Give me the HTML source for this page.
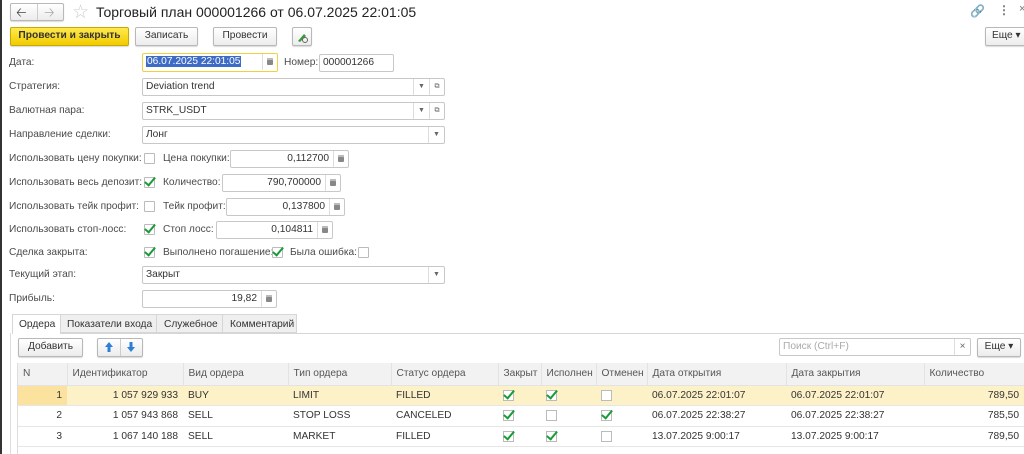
<!DOCTYPE html>
<html><head><meta charset="utf-8"><style>
*{box-sizing:border-box;margin:0;padding:0}
body{width:1024px;height:454px;overflow:hidden;background:#fff;font-family:"Liberation Sans",Arial,sans-serif;font-size:10.2px;color:#333;position:relative}
.a{position:absolute;white-space:nowrap}
.lbl{position:absolute;color:#4a4a4a;font-size:10.2px;line-height:14px;white-space:nowrap}
.btn{position:absolute;border:1px solid #b8b8b8;border-radius:2px;background:linear-gradient(#fff,#ececec);box-shadow:0 1px 1px rgba(0,0,0,.15);text-align:center;font-size:10.2px;line-height:16px;color:#333;white-space:nowrap}
.inp{position:absolute;border:1px solid #c8c8c8;border-radius:2px;background:#fff;height:18px;line-height:16px;padding:0 3px;font-size:10.2px;color:#333;white-space:nowrap}
.dd{position:absolute;right:0;top:0;width:16px;height:16px;border-left:1px solid #ddd;text-align:center;font-size:7px;color:#666;line-height:16px}
.cb{position:absolute;width:11px;height:11px;border:1px solid #bbb;border-radius:1px;background:#fff}
.ck::after{content:"";position:absolute;left:2px;top:-3px;width:4px;height:9px;border-right:2px solid #1a9a3a;border-bottom:2px solid #1a9a3a;transform:rotate(40deg)}
.calc{position:absolute;right:0;top:0;width:15px;height:16px;border-left:1px solid #ddd}
.calc::after{content:"";position:absolute;left:4px;top:4px;width:6px;height:7px;background:#888;border-radius:1px;box-shadow:inset 0 2px 0 #bbb}
table{border-collapse:collapse;position:absolute;left:18px;top:363px;table-layout:fixed;width:1006px}
td{height:20.5px;border-bottom:1px solid #e6e6e6;padding:0 5px;white-space:nowrap;overflow:hidden;font-size:10.2px;color:#333;position:relative}
th{height:22px;background:#f2f2f2;font-weight:normal;text-align:left;color:#555;padding:0 5px;border-right:1px solid #e3e3e3;font-size:10.2px;border-bottom:1px solid #e3e3e3;white-space:nowrap;overflow:hidden}
.r{text-align:right}
.hl td{background:#fdf1c8}
.hl td.n{background:#fbe39f}
.tcb{position:relative;display:inline-block;width:11px;height:11px;border:1px solid #bbb;background:#fff;vertical-align:middle}
</style></head><body>
<div class="a" style="left:0;top:0;width:2px;height:454px;background:#333"></div>
<div class="a" style="left:10px;top:333px;width:1px;height:121px;background:#ddd"></div>
<!-- nav -->
<div class="btn" style="left:10px;top:3px;width:54px;height:18px"></div>
<div class="a" style="left:37px;top:4px;width:1px;height:16px;background:#ccc"></div>
<div class="a" style="left:16px;top:4px;font-size:13px;color:#444">&#129120;</div>
<div class="a" style="left:44px;top:4px;font-size:13px;color:#aaa">&#129122;</div>
<div class="a" style="left:72px;top:1px;font-size:19px;color:#ccc">☆</div>
<div class="a" style="left:96px;top:4px;font-size:14px;color:#222">Торговый план 000001266 от 06.07.2025 22:01:05</div>
<div class="a" style="left:970px;top:4px;font-size:12px;color:#999">&#128279;</div>
<div class="a" style="left:998px;top:3px;font-size:12px;color:#777;font-weight:bold">⋮</div>
<div class="a" style="left:1019px;top:3px;font-size:11px;color:#777">×</div>
<!-- toolbar -->
<div class="btn" style="left:10px;top:27px;width:119px;height:19px;background:linear-gradient(#ffe94d,#f2cc00);border-color:#c9a800;font-weight:bold;color:#333">Провести и закрыть</div>
<div class="btn" style="left:135px;top:27px;width:63px;height:19px">Записать</div>
<div class="btn" style="left:213px;top:27px;width:64px;height:19px">Провести</div>
<div class="btn" style="left:292px;top:27px;width:20px;height:19px"><svg width="14" height="14" viewBox="0 0 14 14" style="margin-top:2px"><path d="M3 11 L9 4 L11 6 L5 12 Z" fill="#3a9a3a"/><circle cx="10" cy="10" r="2.5" fill="none" stroke="#666"/></svg></div>
<div class="btn" style="left:985px;top:27px;width:45px;height:19px;text-align:left;padding-left:6px">Еще ▾</div>
<!-- fields -->
<div class="lbl" style="left:9px;top:56px">Дата:</div>
<div class="inp" style="left:142px;top:53px;width:136px;height:19px;border-color:#f0d040"><span style="background:#3d6bc6;color:#fff;padding:0 1px">06.07.2025 22:01:05</span><div class="calc"></div></div>
<div class="lbl" style="left:284px;top:56px">Номер:</div>
<div class="inp" style="left:319px;top:54px;width:75px">000001266</div>

<div class="lbl" style="left:9px;top:80px">Стратегия:</div>
<div class="inp" style="left:142px;top:78px;width:303px">Deviation trend<div class="dd" style="right:15px">▼</div><div class="dd" style="width:15px">⧉</div></div>
<div class="lbl" style="left:9px;top:104px">Валютная пара:</div>
<div class="inp" style="left:142px;top:102px;width:303px">STRK_USDT<div class="dd" style="right:15px">▼</div><div class="dd" style="width:15px">⧉</div></div>
<div class="lbl" style="left:9px;top:128px">Направление сделки:</div>
<div class="inp" style="left:142px;top:126px;width:303px">Лонг<div class="dd">▼</div></div>

<div class="lbl" style="left:9px;top:152px">Использовать цену покупки:</div>
<div class="cb" style="left:144px;top:153px"></div>
<div class="lbl" style="left:163px;top:152px">Цена покупки:</div>
<div class="inp r" style="left:230px;top:150px;width:119px;padding-right:19px">0,112700<div class="calc"></div></div>

<div class="lbl" style="left:9px;top:176px">Использовать весь депозит:</div>
<div class="cb ck" style="left:144px;top:177px"></div>
<div class="lbl" style="left:163px;top:176px">Количество:</div>
<div class="inp r" style="left:222px;top:174px;width:119px;padding-right:19px">790,700000<div class="calc"></div></div>

<div class="lbl" style="left:9px;top:200px">Использовать тейк профит:</div>
<div class="cb" style="left:144px;top:201px"></div>
<div class="lbl" style="left:163px;top:200px">Тейк профит:</div>
<div class="inp r" style="left:226px;top:198px;width:119px;padding-right:19px">0,137800<div class="calc"></div></div>

<div class="lbl" style="left:9px;top:223px">Использовать стоп-лосс:</div>
<div class="cb ck" style="left:144px;top:224px"></div>
<div class="lbl" style="left:163px;top:223px">Стоп лосс:</div>
<div class="inp r" style="left:216px;top:221px;width:117px;padding-right:19px">0,104811<div class="calc"></div></div>

<div class="lbl" style="left:9px;top:246px">Сделка закрыта:</div>
<div class="cb ck" style="left:144px;top:247px"></div>
<div class="lbl" style="left:163px;top:246px">Выполнено погашение:</div>
<div class="cb ck" style="left:272px;top:247px"></div>
<div class="lbl" style="left:290px;top:246px">Была ошибка:</div>
<div class="cb" style="left:358px;top:247px"></div>

<div class="lbl" style="left:9px;top:268px">Текущий этап:</div>
<div class="inp" style="left:142px;top:266px;width:303px">Закрыт<div class="dd">▼</div></div>
<div class="lbl" style="left:9px;top:292px">Прибыль:</div>
<div class="inp r" style="left:142px;top:290px;width:135px;padding-right:19px">19,82<div class="calc"></div></div>

<!-- tabs -->
<div class="a" style="left:60px;top:333px;width:964px;height:1px;background:#d6d6d6"></div>
<div class="a" style="left:12px;top:314px;width:49px;height:20px;border:1px solid #d6d6d6;border-bottom:none;background:#fff;padding:4px 0 0 6px">Ордера</div>
<div class="a" style="left:60px;top:314px;width:97px;height:19px;border:1px solid #d6d6d6;background:#efefef;padding:4px 0 0 6px">Показатели входа</div>
<div class="a" style="left:156px;top:314px;width:67px;height:19px;border:1px solid #d6d6d6;background:#efefef;padding:4px 0 0 7px">Служебное</div>
<div class="a" style="left:222px;top:314px;width:75px;height:19px;border:1px solid #d6d6d6;background:#efefef;padding:4px 0 0 7px">Комментарий</div>

<div class="btn" style="left:18px;top:338px;width:65px;height:19px">Добавить</div>
<div class="btn" style="left:97px;top:338px;width:46px;height:19px"></div>
<div class="a" style="left:120px;top:339px;width:1px;height:17px;background:#ccc"></div>
<svg class="a" style="left:104px;top:341px" width="10" height="12" viewBox="0 0 10 12"><path d="M5 1 L9 6 H6.5 V11 H3.5 V6 H1 Z" fill="#2f7fd6"/></svg>
<svg class="a" style="left:126px;top:341px" width="10" height="12" viewBox="0 0 10 12"><path d="M5 11 L9 6 H6.5 V1 H3.5 V6 H1 Z" fill="#2f7fd6"/></svg>
<div class="inp" style="left:779px;top:338px;width:192px;color:#aaa">Поиск (Ctrl+F)<div class="dd" style="font-size:10px">×</div></div>
<div class="btn" style="left:977px;top:338px;width:44px;height:19px">Еще ▾</div>

<table>
<colgroup><col style="width:49px"><col style="width:116px"><col style="width:105px"><col style="width:103px"><col style="width:107px"><col style="width:43px"><col style="width:55px"><col style="width:51px"><col style="width:139px"><col style="width:138px"><col style="width:100px"></colgroup>
<tr><th>N</th><th>Идентификатор</th><th>Вид ордера</th><th>Тип ордера</th><th>Статус ордера</th><th>Закрыт</th><th>Исполнен</th><th>Отменен</th><th>Дата открытия</th><th>Дата закрытия</th><th>Количество</th></tr>
<tr class="hl"><td class="n r">1</td><td class="r">1 057 929 933</td><td>BUY</td><td>LIMIT</td><td>FILLED</td><td><span class="tcb ck"></span></td><td><span class="tcb ck"></span></td><td><span class="tcb"></span></td><td>06.07.2025 22:01:07</td><td>06.07.2025 22:01:07</td><td class="r">789,50</td></tr>
<tr><td class="r">2</td><td class="r">1 057 943 868</td><td>SELL</td><td>STOP LOSS</td><td>CANCELED</td><td><span class="tcb ck"></span></td><td><span class="tcb"></span></td><td><span class="tcb ck"></span></td><td>06.07.2025 22:38:27</td><td>06.07.2025 22:38:27</td><td class="r">785,50</td></tr>
<tr><td class="r">3</td><td class="r">1 067 140 188</td><td>SELL</td><td>MARKET</td><td>FILLED</td><td><span class="tcb ck"></span></td><td><span class="tcb ck"></span></td><td><span class="tcb"></span></td><td>13.07.2025 9:00:17</td><td>13.07.2025 9:00:17</td><td class="r">789,50</td></tr>
</table>
<div class="a" style="left:17px;top:363px;width:1px;height:91px;background:#ddd"></div>
</body></html>
